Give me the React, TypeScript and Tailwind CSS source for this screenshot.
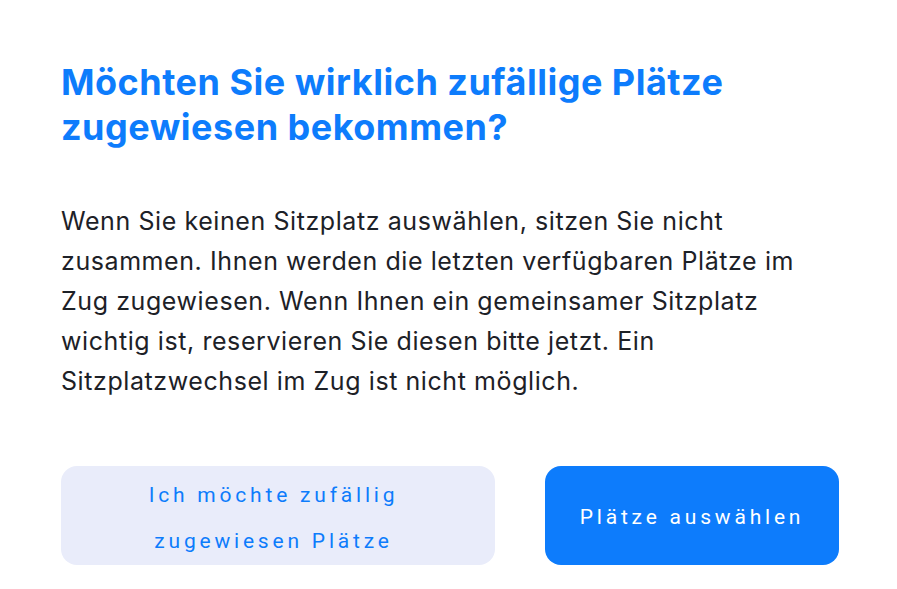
import React from "react";

export default function App() {
  return (
    <div className="w-[897px] h-[589px] bg-white overflow-hidden">
      <div className="pl-[61px] pt-[60px] w-[839px]">
        <h1 className="text-[#0d7cfc] font-bold text-[36px] leading-[45px] font-['Inter',sans-serif] tracking-[0.5px]">
          Möchten Sie wirklich zufällige Plätze
          <br />
          zugewiesen bekommen?
        </h1>
        <p className="mt-[51px] text-[#1d2127] text-[25px] leading-[40px] font-['Inter',sans-serif] tracking-[0.58px]">
          Wenn Sie keinen Sitzplatz auswählen, sitzen Sie nicht
          <br />
          zusammen. Ihnen werden die letzten verfügbaren Plätze im
          <br />
          Zug zugewiesen. Wenn Ihnen ein gemeinsamer Sitzplatz
          <br />
          wichtig ist, reservieren Sie diesen bitte jetzt. Ein
          <br />
          Sitzplatzwechsel im Zug ist nicht möglich.
        </p>
        <div className="mt-[65px] flex gap-[50px] font-['Roboto',sans-serif] text-[21px] tracking-[3.8px]">
          <button className="w-[434px] h-[99px] rounded-[16px] bg-[#e9ecfa] text-[#0d7cfc] leading-[46px] pr-[9px] pt-[5px]">
            Ich möchte zufällig
            <br />
            zugewiesen Plätze
          </button>
          <button className="w-[294px] h-[99px] rounded-[16px] bg-[#0d7cfc] text-white pt-[5px]">
            Plätze auswählen
          </button>
        </div>
      </div>
    </div>
  );
}
